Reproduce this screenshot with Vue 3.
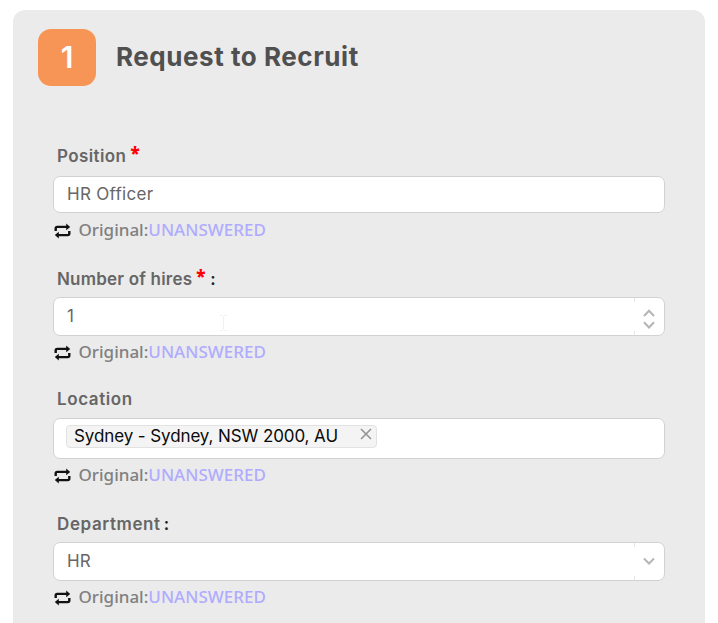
<script setup>
/**
 * Request to Recruit - form step with the original answers under each field
 */
const fields = [
  { key: 'position', label: 'Position', required: true, colon: false, type: 'text', value: 'HR Officer' },
  { key: 'hires', label: 'Number of hires', required: true, colon: true, type: 'number', value: '1' },
  { key: 'location', label: 'Location', required: false, colon: false, type: 'tags', value: 'Sydney - Sydney, NSW 2000, AU' },
  { key: 'department', label: 'Department', required: false, colon: true, type: 'select', value: 'HR' }
];
</script>

<template>
  <section class="panel">
    <header class="panel-header">
      <div class="step"><span>1</span></div>
      <h1 class="title">Request to Recruit</h1>
    </header>

    <div v-for="field in fields" :key="field.key" class="field" :class="field.key">
      <div class="label-row">
        <span class="label">{{ field.label }}</span>
        <span v-if="field.required" class="required">*</span>
        <span v-if="field.colon" class="colon">:</span>
      </div>

      <div class="control" :class="field.type">
        <div v-if="field.type === 'tags'" class="tag">
          <span class="tag-text">{{ field.value }}</span>
          <svg class="tag-close" width="12" height="12" viewBox="0 0 12 12">
            <path d="M1 1 11 11M11 1 1 11" />
          </svg>
        </div>
        <span v-else class="value">{{ field.value }}</span>

        <!-- faint text cursor inside the number input -->
        <svg v-if="field.type === 'number'" class="caret" width="9" height="18" viewBox="0 0 9 18">
          <path d="M1 1.5H3.5L4.5 2.5 5.5 1.5H8M4.5 2.5V15.5M1 16.5H3.5L4.5 15.5 5.5 16.5H8" />
        </svg>

        <div v-if="field.type === 'number' || field.type === 'select'" class="addon">
          <svg v-if="field.type === 'number'" width="14" height="20" viewBox="0 0 14 20">
            <path d="M2 7 7 1.8 12 7M2 13.3 7 18.5 12 13.3" />
          </svg>
          <svg v-else width="14" height="8" viewBox="0 0 14 8">
            <path d="M2 1.5 7 6.5 12 1.5" />
          </svg>
        </div>
      </div>

      <div class="original">
        <svg class="swap" width="17" height="16" viewBox="0 0 17 16">
          <path class="line" d="M1.7 8V5.4Q1.7 3.9 3.2 3.9H13M15.3 8V10.6Q15.3 12.1 13.8 12.1H4" />
          <path class="head" d="M12.2 .6 16.2 3.9 12.2 7.2ZM4.8 8.8.8 12.1 4.8 15.4Z" />
        </svg>
        <span class="original-label">Original:</span>
        <span class="original-value">UNANSWERED</span>
      </div>
    </div>
  </section>
</template>

<style>
html,
body {
  background: #ffffff;
  overflow: hidden;
}
</style>

<style scoped>
.panel {
  box-sizing: border-box;
  width: 692px;
  height: 623px;
  margin: 9.5px 0 0 12.5px;
  padding: 19.5px 40px 0 40.5px;
  border-radius: 12px 12px 0 0;
  background: #ebebeb;
  font-family: Inter, 'Liberation Sans', sans-serif;
  overflow: hidden;
}

/* header */
.panel-header {
  display: flex;
  align-items: center;
  gap: 20px;
  height: 57px;
  margin: 0 0 41px -15px;
}

.step {
  display: flex;
  align-items: center;
  justify-content: center;
  box-sizing: border-box;
  width: 58px;
  height: 57px;
  padding-bottom: 2px;
  border-radius: 13px;
  background: #f79556;
  color: #ffffff;
  font-size: 30px;
  font-weight: 600;
}

.title {
  margin: 0;
  padding-bottom: 2px;
  color: #505050;
  font-size: 26px;
  font-weight: 700;
  line-height: 34px;
  letter-spacing: 0.55px;
  white-space: nowrap;
}

/* label */
.label-row {
  box-sizing: border-box;
  display: flex;
  height: 49px;
  padding: 20px 0 7px 4px;
  font-size: 17px;
  font-weight: 600;
  line-height: 22px;
}

.position .label-row {
  padding-top: 18px;
}

.hires .label-row {
  height: 50px;
  padding-top: 21px;
}

.location .label-row {
  height: 48px;
  padding-top: 18px;
}

.label {
  color: #666666;
  letter-spacing: 0.6px;
  white-space: nowrap;
}

.position .label {
  letter-spacing: 0.4px;
}

.hires .label {
  letter-spacing: 0.2px;
}

.required {
  margin: -3px 0 0 4px;
  color: #ff0000;
  font-family: 'Open Sans', sans-serif;
  font-size: 17px;
  font-weight: 800;
}

.colon {
  margin-left: 3px;
  color: #222222;
}

.required + .colon {
  margin-left: 5px;
}

/* input */
.control {
  position: relative;
  box-sizing: border-box;
  display: flex;
  align-items: center;
  height: 37px;
  padding-left: 13px;
  border: 1px solid #d2d2d2;
  border-radius: 7px;
  background: #ffffff;
}

.control.number {
  height: 39px;
}

.control.tags {
  height: 41px;
}

.control.select {
  height: 39px;
}

.value {
  color: #666666;
  font-size: 17px;
  line-height: 22px;
  letter-spacing: 0.3px;
  padding-bottom: 2px;
}

.select .value {
  letter-spacing: 0;
}

.addon {
  display: flex;
  align-items: center;
  justify-content: center;
  width: 30px;
  height: 100%;
  margin-left: auto;
  border-radius: 0 6px 6px 0;
  background:
    linear-gradient(#e6e6e6, #e6e6e6) 0 0 / 1px 4px no-repeat,
    linear-gradient(#e6e6e6, #e6e6e6) 0 100% / 1px 4px no-repeat;
}

.addon path {
  fill: none;
  stroke: #b5b5b5;
  stroke-width: 2;
}

.number .addon svg {
  margin-top: 5px;
}

.select .addon svg {
  margin-bottom: 2px;
}

.caret {
  position: absolute;
  left: 165px;
  top: 16px;
}

.caret path {
  fill: none;
  stroke: #f1f1f1;
}

/* tag */
.tag {
  box-sizing: border-box;
  display: flex;
  align-items: center;
  justify-content: space-between;
  width: 311px;
  height: 23px;
  margin: 0 0 4px -1px;
  padding: 0 4.5px 0 7px;
  border: 1px solid #e2e2e2;
  border-radius: 4px;
  background: #f4f4f4;
}

.tag-text {
  color: #0a0a0a;
  font-size: 17px;
  line-height: 21px;
  letter-spacing: -0.1px;
  white-space: nowrap;
}

.tag-close {
  margin-bottom: 5px;
}

.tag-close path {
  fill: none;
  stroke: #939393;
  stroke-width: 1.6;
}

/* original answer */
.original {
  box-sizing: border-box;
  display: flex;
  align-items: center;
  height: 34px;
  padding-left: 1px;
  font-family: 'Noto Sans', 'Open Sans', sans-serif;
  font-size: 17px;
  font-weight: 500;
  line-height: 22px;
}

.hires .original,
.location .original,
.department .original {
  padding-bottom: 2px;
}

.swap {
  margin: 2px 7.5px 0 0;
}

.swap .line {
  fill: none;
  stroke: #111111;
  stroke-width: 2.4;
}

.swap .head {
  fill: #111111;
}

.original-label {
  color: #808080;
}

.original-value {
  color: #b0abff;
}
</style>
